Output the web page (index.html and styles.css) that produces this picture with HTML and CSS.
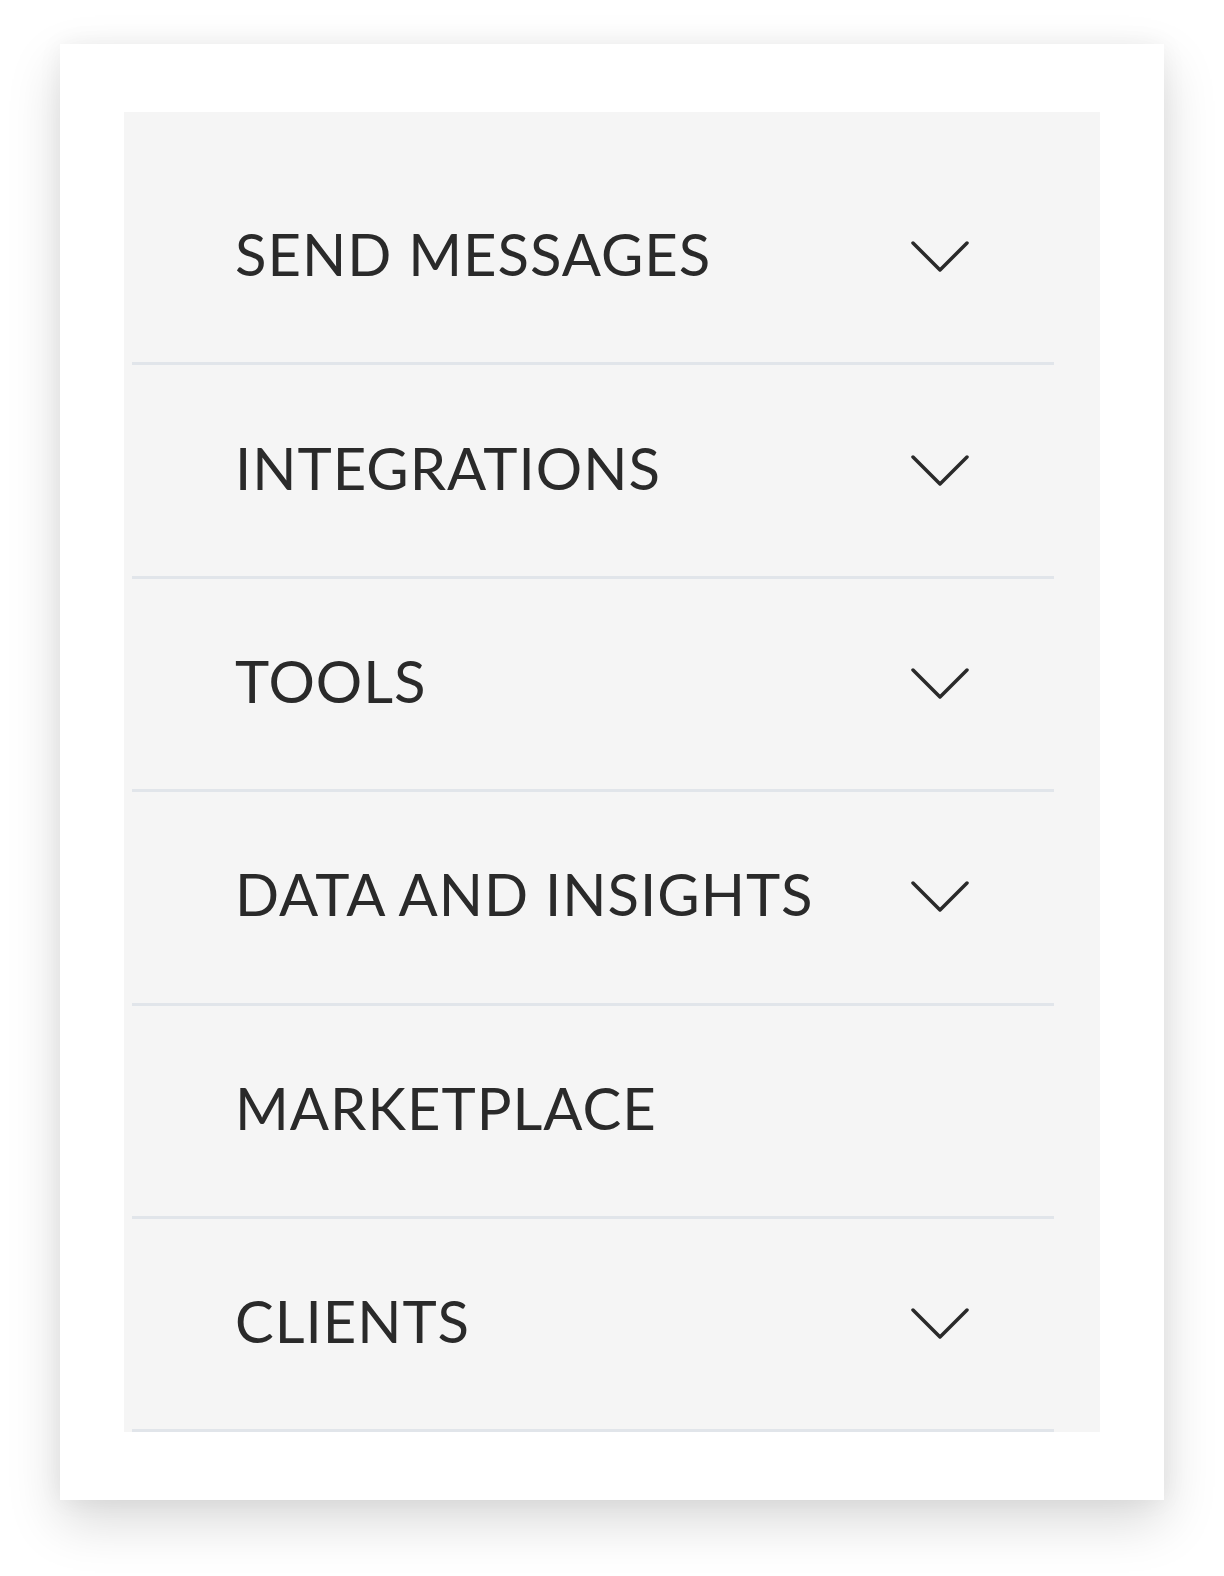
FILE: index.html
```html
<!DOCTYPE html>
<html lang="en">
<head>
    <meta charset="UTF-8">
    <meta name="viewport" content="width=device-width, initial-scale=1.0">
    <title>Menu</title>
    <link rel="stylesheet" href="styles.css">
</head>
<body>
    <div class="card">
        <nav class="menu">
            <ul class="menu-list">
                <li class="menu-item">
                    <a class="menu-link" href="#">
                        <span class="menu-label">SEND MESSAGES</span>
                        <svg class="chevron" viewBox="0 0 58 32"><polyline points="2,2 29,29 56,2"/></svg>
                    </a>
                </li>
                <li class="menu-item">
                    <a class="menu-link" href="#">
                        <span class="menu-label">INTEGRATIONS</span>
                        <svg class="chevron" viewBox="0 0 58 32"><polyline points="2,2 29,29 56,2"/></svg>
                    </a>
                </li>
                <li class="menu-item">
                    <a class="menu-link" href="#">
                        <span class="menu-label">TOOLS</span>
                        <svg class="chevron" viewBox="0 0 58 32"><polyline points="2,2 29,29 56,2"/></svg>
                    </a>
                </li>
                <li class="menu-item">
                    <a class="menu-link" href="#">
                        <span class="menu-label">DATA AND INSIGHTS</span>
                        <svg class="chevron" viewBox="0 0 58 32"><polyline points="2,2 29,29 56,2"/></svg>
                    </a>
                </li>
                <li class="menu-item">
                    <a class="menu-link" href="#">
                        <span class="menu-label">MARKETPLACE</span>
                    </a>
                </li>
                <li class="menu-item">
                    <a class="menu-link" href="#">
                        <span class="menu-label">CLIENTS</span>
                        <svg class="chevron" viewBox="0 0 58 32"><polyline points="2,2 29,29 56,2"/></svg>
                    </a>
                </li>
            </ul>
        </nav>
    </div>
</body>
</html>
```

FILE: styles.css
```css
* {
    margin: 0;
    padding: 0;
    box-sizing: border-box;
}

body {
    font-family: 'Lato', 'Liberation Sans', sans-serif;
    background: #ffffff;
    min-height: 100vh;
    padding: 44px 60px 76px;
}

.card {
    background: white;
    height: 1456px;
    padding: 68px 64px;
    box-shadow: 0 22px 50px rgba(0,0,0,0.15), 0 0 24px rgba(0,0,0,0.05);
}

.menu {
    background: #f5f5f5;
    height: 100%;
    padding: 40px 46px 0 8px;
}

.menu-list {
    list-style: none;
}

.menu-item {
    height: 213.4px;
    border-bottom: 3px solid #e1e5ea;
}

.menu-link {
    display: flex;
    align-items: center;
    justify-content: space-between;
    height: 100%;
    padding: 0 85px 0 103px;
    color: #2a2a2a;
    text-decoration: none;
}

.menu-label {
    font-size: 58px;
    line-height: 1;
    letter-spacing: 1px;
    margin-bottom: 6px;
}

.chevron {
    width: 58px;
    height: 32px;
    fill: none;
    stroke: #2a2a2a;
    stroke-width: 3.5;
    stroke-linecap: round;
    stroke-linejoin: round;
}
```
